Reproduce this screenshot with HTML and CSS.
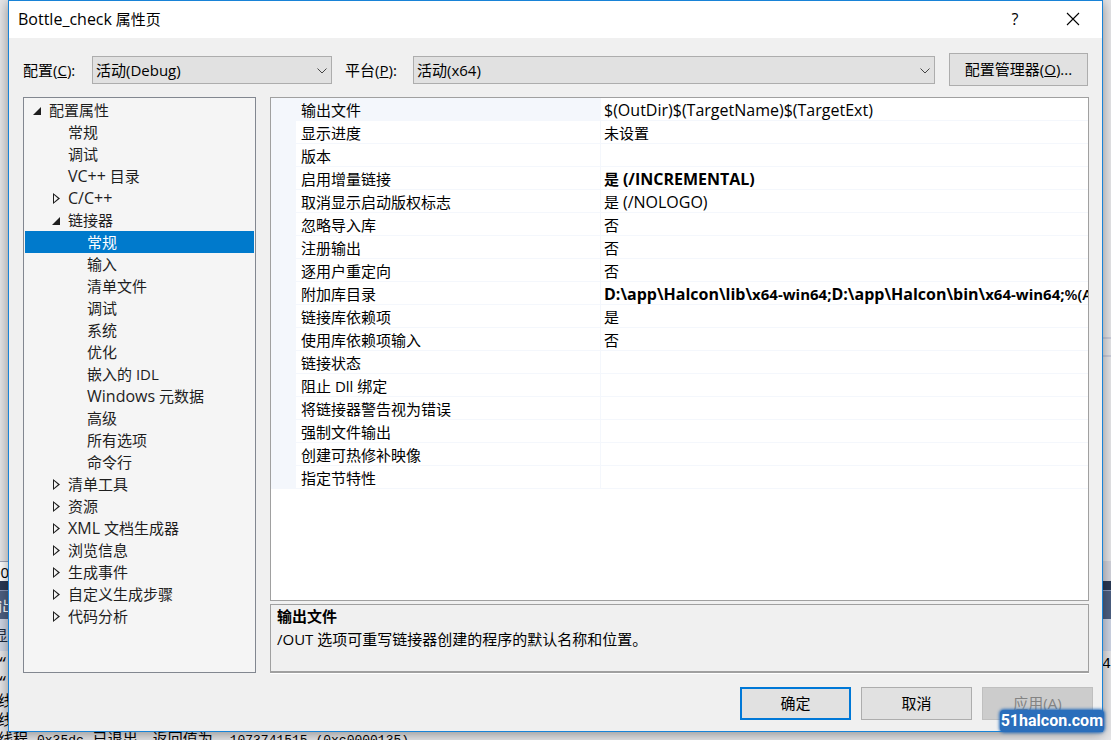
FILE: index.html
```html
<!DOCTYPE html>
<html lang="zh-CN">
<head>
    <meta charset="UTF-8">
    <meta name="viewport" content="width=device-width, initial-scale=1.0">
    <title>Bottle_check 属性页</title>
    <link rel="stylesheet" href="styles.css">
</head>
<body>
    <!-- IDE atrás -->
    <div class="ide">
        <div class="ide-editor"><div class="ide-splitter"></div></div>
        <div class="ide-status"><span class="ide-field">00</span></div>
        <div class="ide-gap"></div>
        <div class="ide-tab">输出</div>
        <div class="ide-source">显</div>
        <div class="ide-output">
            <p><span>“</span><span>4</span></p>
            <p>“</p>
            <p>线</p>
            <p>线</p>
            <p>线程 <code>0x35dc</code> 已退出，返回值为 <code>-1073741515 (0xc0000135)</code>。</p>
        </div>
    </div>

    <div class="dialog" role="dialog" aria-labelledby="titulo">
        <header class="titlebar">
            <h1 id="titulo"><span class="latin">Bottle_check</span> 属性页</h1>
            <button type="button" class="help" aria-label="帮助">?</button>
            <button type="button" aria-label="关闭">
                <svg width="14" height="14" viewBox="0 0 14 14"><path d="M1 1L13 13M13 1L1 13" stroke="#000" stroke-width="1.1" fill="none"/></svg>
            </button>
        </header>

        <div class="toolbar">
            <label for="config">配置(<u>C</u>):</label>
            <div class="combo combo-config">
                <select id="config"><option>活动(Debug)</option></select>
                <svg width="10" height="6" viewBox="0 0 10 6"><path d="M.5.5L5 5L9.5.5" stroke="#444" fill="none"/></svg>
            </div>
            <label for="plataforma">平台(<u>P</u>):</label>
            <div class="combo combo-platform">
                <select id="plataforma"><option>活动(x64)</option></select>
                <svg width="10" height="6" viewBox="0 0 10 6"><path d="M.5.5L5 5L9.5.5" stroke="#444" fill="none"/></svg>
            </div>
            <button type="button" class="btn btn-manager">配置管理器(<u>O</u>)...</button>
        </div>

        <main class="content">
            <ul class="tree">
                <li><div class="node open">配置属性</div>
                    <ul>
                        <li><div class="node">常规</div></li>
                        <li><div class="node">调试</div></li>
                        <li><div class="node"><span class="latin">VC++</span> 目录</div></li>
                        <li><div class="node closed"><span class="latin">C/C++</span></div></li>
                        <li><div class="node open">链接器</div>
                            <ul>
                                <li><div class="node selected">常规</div></li>
                                <li><div class="node">输入</div></li>
                                <li><div class="node">清单文件</div></li>
                                <li><div class="node">调试</div></li>
                                <li><div class="node">系统</div></li>
                                <li><div class="node">优化</div></li>
                                <li><div class="node">嵌入的 IDL</div></li>
                                <li><div class="node"><span class="latin">Windows</span> 元数据</div></li>
                                <li><div class="node">高级</div></li>
                                <li><div class="node">所有选项</div></li>
                                <li><div class="node">命令行</div></li>
                            </ul>
                        </li>
                        <li><div class="node closed">清单工具</div></li>
                        <li><div class="node closed">资源</div></li>
                        <li><div class="node closed"><span class="latin">XML</span> 文档生成器</div></li>
                        <li><div class="node closed">浏览信息</div></li>
                        <li><div class="node closed">生成事件</div></li>
                        <li><div class="node closed">自定义生成步骤</div></li>
                        <li><div class="node closed">代码分析</div></li>
                    </ul>
                </li>
            </ul>

            <div class="panel">
                <div class="grid">
                    <table>
                        <colgroup><col class="col-gutter"><col class="col-name"><col></colgroup>
                        <tbody>
                            <tr class="current"><td></td><th scope="row">输出文件</th><td><span class="latin">$(OutDir)$(TargetName)$(TargetExt)</span></td></tr>
                            <tr><td></td><th scope="row">显示进度</th><td>未设置</td></tr>
                            <tr><td></td><th scope="row">版本</th><td></td></tr>
                            <tr><td></td><th scope="row">启用增量链接</th><td class="changed">是 <span class="latin">(/INCREMENTAL)</span></td></tr>
                            <tr><td></td><th scope="row">取消显示启动版权标志</th><td>是 <span class="latin">(/NOLOGO)</span></td></tr>
                            <tr><td></td><th scope="row">忽略导入库</th><td>否</td></tr>
                            <tr><td></td><th scope="row">注册输出</th><td>否</td></tr>
                            <tr><td></td><th scope="row">逐用户重定向</th><td>否</td></tr>
                            <tr><td></td><th scope="row">附加库目录</th><td class="changed"><span class="latin">D:\app\Halcon\lib\</span>x64-win64;<span class="latin">D:\app\Halcon\bin\</span>x64-win64;<span class="inherited">%(A</span></td></tr>
                            <tr><td></td><th scope="row">链接库依赖项</th><td>是</td></tr>
                            <tr><td></td><th scope="row">使用库依赖项输入</th><td>否</td></tr>
                            <tr><td></td><th scope="row">链接状态</th><td></td></tr>
                            <tr><td></td><th scope="row">阻止 Dll 绑定</th><td></td></tr>
                            <tr><td></td><th scope="row">将链接器警告视为错误</th><td></td></tr>
                            <tr><td></td><th scope="row">强制文件输出</th><td></td></tr>
                            <tr><td></td><th scope="row">创建可热修补映像</th><td></td></tr>
                            <tr><td></td><th scope="row">指定节特性</th><td></td></tr>
                        </tbody>
                    </table>
                </div>
                <div class="description">
                    <h2>输出文件</h2>
                    <p>/OUT 选项可重写链接器创建的程序的默认名称和位置。</p>
                </div>
            </div>
        </main>

        <footer class="actions">
            <button type="button" class="btn btn-default">确定</button>
            <button type="button" class="btn">取消</button>
            <button type="button" class="btn" disabled>应用(<u>A</u>)</button>
        </footer>
    </div>

    <div class="watermark">51halcon.com</div>
</body>
</html>
```
FILE: styles.css
```css
* {
    box-sizing: border-box;
}
body {
    margin: 0;
    position: relative;
    min-height: 100vh;
    overflow: hidden;
    font-family: "Open Sans", "Noto Sans CJK SC", sans-serif;
    font-size: 15px;
    line-height: 22px;
    color: #000;
}
h1, h2, p, ul {
    margin: 0;
    padding: 0;
    font-size: 15px;
    font-weight: normal;
}
ul {
    list-style: none;
}
button, select {
    font: inherit;
    color: inherit;
}
.latin {
    font-size: 16px;
    line-height: 20px;
}

/* janela de trás */
.ide {
    display: flex;
    flex-direction: column;
    height: 100vh;
    background: #e6e6e8;
    overflow: hidden;
    white-space: nowrap;
}
.ide-editor {
    flex: 1;
    display: flex;
    flex-direction: column;
    align-items: flex-end;
    justify-content: flex-end;
    padding-bottom: 204px;
}
.ide-splitter {
    width: 50%;
    height: 20px;
    border: 2px solid #cccedb;
    border-width: 2px 0;
}
.ide-status {
    height: 20px;
    background: #d3d4dc;
}
.ide-field {
    display: block;
    width: 60px;
    height: 20px;
    line-height: 20px;
    background: #fff;
    border-top: 1px solid #a0a6b8;
    text-indent: -8px;
}
.ide-gap {
    height: 10px;
    background: #293955;
    border-bottom: 1px solid #8e9bbc;
}
.ide-tab {
    height: 28px;
    line-height: 28px;
    background: #4d6082;
    color: #fff;
    text-indent: -13px;
}
.ide-source {
    height: 32px;
    line-height: 32px;
    background: #cfd6e5;
    color: #1b293e;
    text-indent: -7px;
}
.ide-output {
    height: 89px;
    padding-top: 4px;
    font-family: "Liberation Mono", "Noto Sans CJK SC", monospace;
    line-height: 19px;
}
.ide-output p {
    display: flow-root;
    height: 19px;
    text-indent: -2px;
}
.ide-output p:first-child {
    display: flex;
    justify-content: space-between;
}
.ide-output code {
    font-family: inherit;
    font-size: 13px;
}

.dialog {
    position: absolute;
    inset: 0 8px 8px;
    display: flex;
    flex-direction: column;
    background: #f0f0f0;
    border: 1px solid #1883d7;
    box-shadow: 0 2px 12px rgba(0, 0, 0, 0.4);
}
.titlebar {
    display: flex;
    align-items: flex-start;
    height: 37px;
    background: #fff;
    padding-left: 9px;
}
.titlebar h1 {
    flex: 1;
    line-height: 36px;
}
.titlebar button {
    width: 58px;
    height: 36px;
    padding: 0;
    border: none;
    background: none;
}
.titlebar .help {
    font-size: 16px;
}
.titlebar svg {
    display: block;
    margin: 0 auto;
}

.toolbar {
    display: flex;
    align-items: center;
    padding: 15px 14px 10px;
    line-height: 20px;
}
.toolbar label[for="config"] {
    width: 69px;
}
.toolbar label[for="plataforma"] {
    width: 68px;
}
.combo {
    position: relative;
    height: 28px;
}
.combo-config {
    width: 240px;
    margin-right: 13px;
}
.combo-platform {
    flex: 1;
    margin-right: 14px;
}
.combo select {
    appearance: none;
    display: block;
    width: 100%;
    height: 28px;
    padding: 0 3px;
    border: 1px solid #adadad;
    border-radius: 0;
    background: #e1e1e1;
}
.combo svg {
    position: absolute;
    right: 5px;
    top: 12px;
    pointer-events: none;
}

.btn {
    width: 111px;
    height: 33px;
    padding: 0 0 2px;
    border: 1px solid #adadad;
    background: #e1e1e1;
}
.btn-manager {
    width: 139px;
}
.btn-default {
    border: 2px solid #0078d7;
}
.btn:disabled {
    background: #ccc;
    border-color: #bfbfbf;
    color: #838383;
}

.content {
    flex: 1;
    display: flex;
    gap: 14px;
    padding: 1px 13px 0 14px;
}

.tree {
    width: 233px;
    padding: 1px;
    border: 1px solid #828790;
    background: #f5f5f5;
    color: #1e1e1e;
}
.node {
    height: 22px;
    padding-left: 24px;
}
.tree ul .node {
    padding-left: 43px;
}
.tree ul ul .node {
    padding-left: 62px;
}
.node.selected {
    background: #007acc;
    color: #fff;
}
/* setas: aberta = cheia, fechada = contorno */
.open::before, .closed::before {
    content: "";
    display: inline-block;
    width: 8px;
    height: 8px;
    margin-left: -16px;
    margin-right: 8px;
    vertical-align: 1px;
    background: #1e1e1e;
    clip-path: polygon(100% 0, 100% 100%, 0 100%);
}
.closed::before {
    width: 7px;
    height: 11px;
    margin-left: -15px;
    vertical-align: 0;
    clip-path: polygon(evenodd, 0 0, 100% 50%, 0 100%, 0 0, 1px 2px, 1px 9px, 5px 50%, 1px 2px, 0 0);
}

.panel {
    flex: 1;
    min-width: 0;
    display: flex;
    flex-direction: column;
    gap: 3px;
}
.grid {
    flex: 1;
    overflow: hidden;
    border: 1px solid #a0a0a0;
    background: #fff;
}
.grid table {
    width: 100%;
    table-layout: fixed;
    border-collapse: separate;
    border-spacing: 0;
}
.col-gutter {
    width: 25px;
}
.col-name {
    width: 305px;
}
.grid th, .grid td {
    height: 23px;
    padding: 1px 0 0 3px;
    line-height: 20px;
    border-bottom: 1px solid #f4f7fc;
    text-align: left;
    font-weight: normal;
    white-space: nowrap;
    overflow: hidden;
}
.grid th {
    padding-left: 5px;
    border-right: 1px solid #f4f7fc;
}
.grid td:first-child, .grid .current th {
    background: #f4f7fc;
}
.grid td.changed {
    font-weight: bold;
}
.grid .inherited {
    font-weight: 600;
}

.description {
    height: 69px;
    padding: 0 6px;
    border: 1px solid #a0a0a0;
    border-bottom-width: 2px;
    box-shadow: 0 1px 0 #fff;
}
.description h2 {
    font-weight: bold;
    line-height: 23px;
}
.description p {
    line-height: 23px;
}

.actions {
    display: flex;
    justify-content: flex-end;
    gap: 10px;
    padding: 14px 9px 11px;
}

.watermark {
    position: absolute;
    right: 7px;
    bottom: 8px;
    padding: 0 1px;
    border-radius: 4px;
    background: #2a6ebb;
    box-shadow: 0 0 3px 1px #2a6ebb;
    color: #fff;
    font-family: Roboto, sans-serif;
    font-size: 16px;
    font-weight: bold;
    line-height: 22px;
}
```
